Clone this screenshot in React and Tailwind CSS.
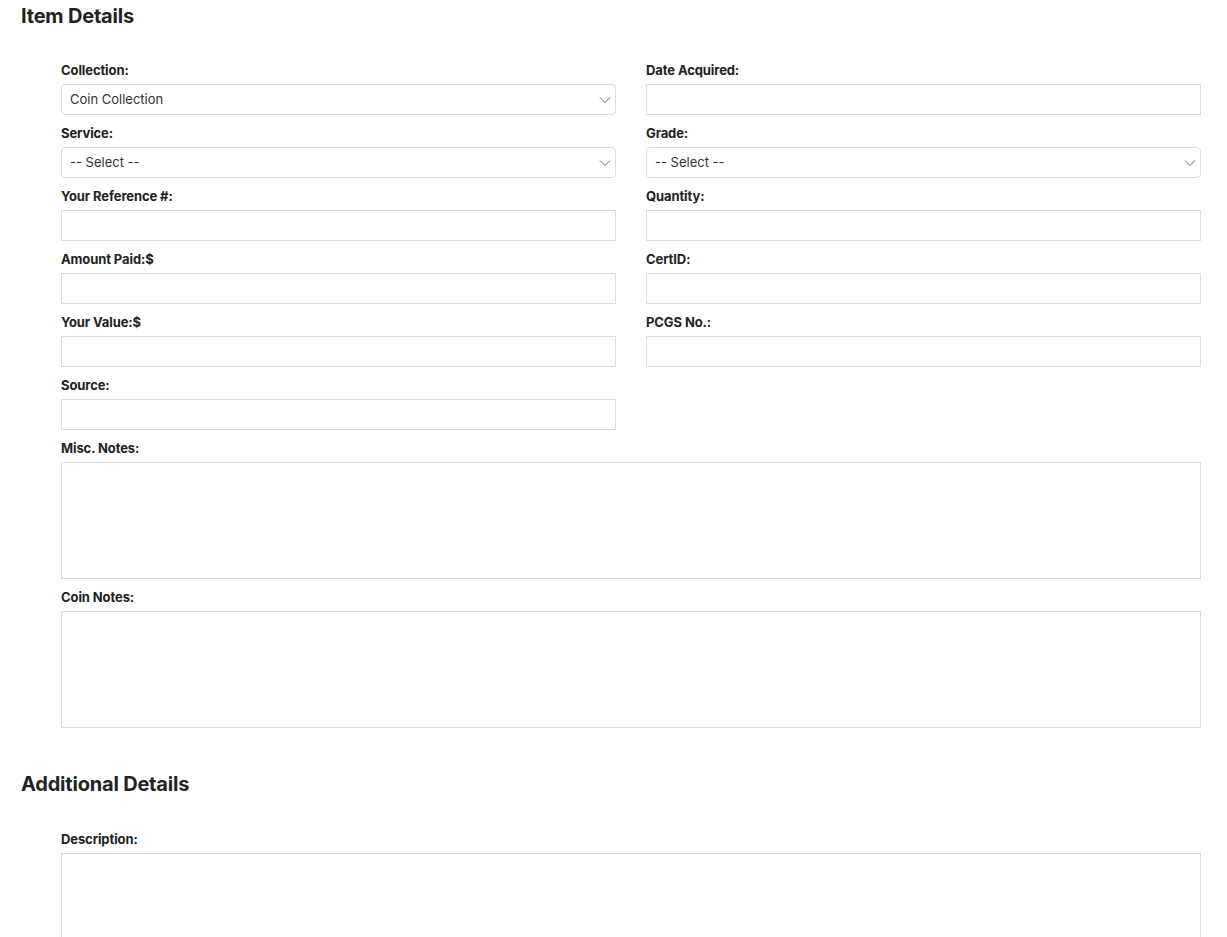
import React from "react";

const font = { fontFamily: "Inter, Lato, 'Open Sans', Arial, sans-serif" };

function Label({ children }) {
  return (
    <div className="h-4 mb-[6px] text-[13px] leading-4 font-bold text-[#222] tracking-[-0.1px]">{children}</div>
  );
}

function Chevron() {
  return (
    <svg width="12" height="8" viewBox="0 0 12 8" className="absolute right-[4px] top-[11px]">
      <path d="M1 1.5 L6 6.5 L11 1.5" fill="none" stroke="#666" strokeWidth="1" />
    </svg>
  );
}

function Select({ label, value }) {
  return (
    <div className="mb-[10px]">
      <Label>{label}</Label>
      <div className="relative h-[31px] border border-[#dcdcdc] rounded-[4px] bg-white flex items-center pl-[8px] text-[13px] text-[#333]">
        {value}
        <Chevron />
      </div>
    </div>
  );
}

function Input({ label }) {
  return (
    <div className="mb-[10px]">
      <Label>{label}</Label>
      <div className="h-[31px] border border-[#dcdcdc] bg-white" />
    </div>
  );
}

function TextArea({ label }) {
  return (
    <div className="mb-[10px]">
      <Label>{label}</Label>
      <div className="h-[117px] border border-[#dcdcdc] bg-white" />
    </div>
  );
}

export default function App() {
  return (
    <div className="bg-white min-h-[937px] pl-[21px] text-[#222]" style={font}>
      <h2 className="pt-[5px] h-[62px] text-[20px] leading-[22px] font-bold tracking-[-0.2px]">Item Details</h2>
      <div className="ml-[40px] w-[1140px]">
        <div className="grid grid-cols-[555px_555px] gap-x-[30px]">
          <div>
            <Select label="Collection:" value="Coin Collection" />
            <Select label="Service:" value="-- Select --" />
            <Input label="Your Reference #:" />
            <Input label="Amount Paid:$" />
            <Input label="Your Value:$" />
            <Input label="Source:" />
          </div>
          <div>
            <Input label="Date Acquired:" />
            <Select label="Grade:" value="-- Select --" />
            <Input label="Quantity:" />
            <Input label="CertID:" />
            <Input label="PCGS No.:" />
          </div>
        </div>
        <TextArea label="Misc. Notes:" />
        <TextArea label="Coin Notes:" />
      </div>
      <h2 className="mt-[45px] h-[58px] text-[20px] leading-[22px] font-bold tracking-[-0.2px]">Additional Details</h2>
      <div className="ml-[40px] w-[1140px]">
        <TextArea label="Description:" />
      </div>
    </div>
  );
}
